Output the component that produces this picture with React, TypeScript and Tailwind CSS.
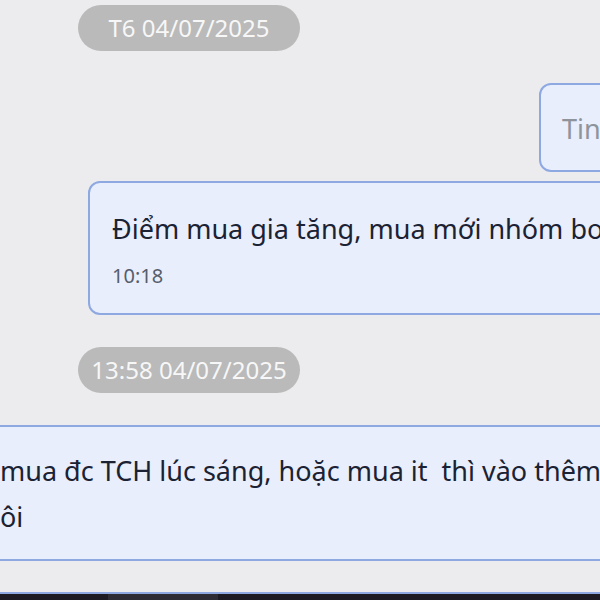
export default function App() {
  return (
    <div
      className="w-[600px] h-[600px] overflow-hidden bg-[#ececee] flex flex-col"
      style={{ fontFamily: '"Noto Sans", "Open Sans", sans-serif' }}
    >
      {/* Date pill */}
      <div className="mt-[5px] ml-[78px] w-[222px] h-[46px] shrink-0 rounded-full bg-[#bababa] flex items-center justify-center text-[24px] leading-none text-[#f7f7f7]">
        T6 04/07/2025
      </div>

      {/* Outgoing bubble (cut off right) */}
      <div className="mt-[32px] ml-[539px] w-[300px] h-[89px] shrink-0 rounded-[12px] border-2 border-[#8ea8e2] bg-[#e8eefb] pl-[21px] pt-[26px]">
        <div className="text-[27px] leading-[36px] text-[#8e939c] whitespace-nowrap">Tin nhắn</div>
      </div>

      {/* Message bubble */}
      <div className="mt-[9px] ml-[88px] w-[700px] h-[134px] shrink-0 rounded-[12px] border-2 border-[#8ea8e2] bg-[#e8eefb] pl-[22px] pt-[28px]">
        <div className="text-[27px] leading-[36px] text-[#1b2233] whitespace-nowrap">
          Điểm mua gia tăng, mua mới nhóm bo
        </div>
        <div className="mt-[16px] text-[20px] leading-[26px] text-[#565d6b]">10:18</div>
      </div>

      {/* Time pill */}
      <div className="mt-[32px] ml-[78px] w-[222px] h-[46px] shrink-0 rounded-full bg-[#bababa] flex items-center justify-center text-[24px] leading-none text-[#f7f7f7]">
        13:58 04/07/2025
      </div>

      {/* Message bubble (cut off both sides) */}
      <div className="mt-[32px] ml-[-40px] w-[700px] h-[136px] shrink-0 rounded-[12px] border-2 border-[#8ea8e2] bg-[#e8eefb] pl-[38px] pt-[21px]">
        <div className="text-[27px] leading-[46px] text-[#1b2233] whitespace-nowrap">
          mua đc TCH lúc sáng, hoặc mua it&nbsp; thì vào thêm
        </div>
        <div className="text-[27px] leading-[46px] text-[#1b2233] whitespace-nowrap">ôi</div>
      </div>

      <div className="flex-1" />

      {/* Bottom bar */}
      <div className="h-[8px] shrink-0 border-t-2 border-[#8ea8e2] bg-[#1c1b24] flex">
        <div className="ml-[108px] w-[110px] bg-[#2d2c34]" />
      </div>
    </div>
  )
}
